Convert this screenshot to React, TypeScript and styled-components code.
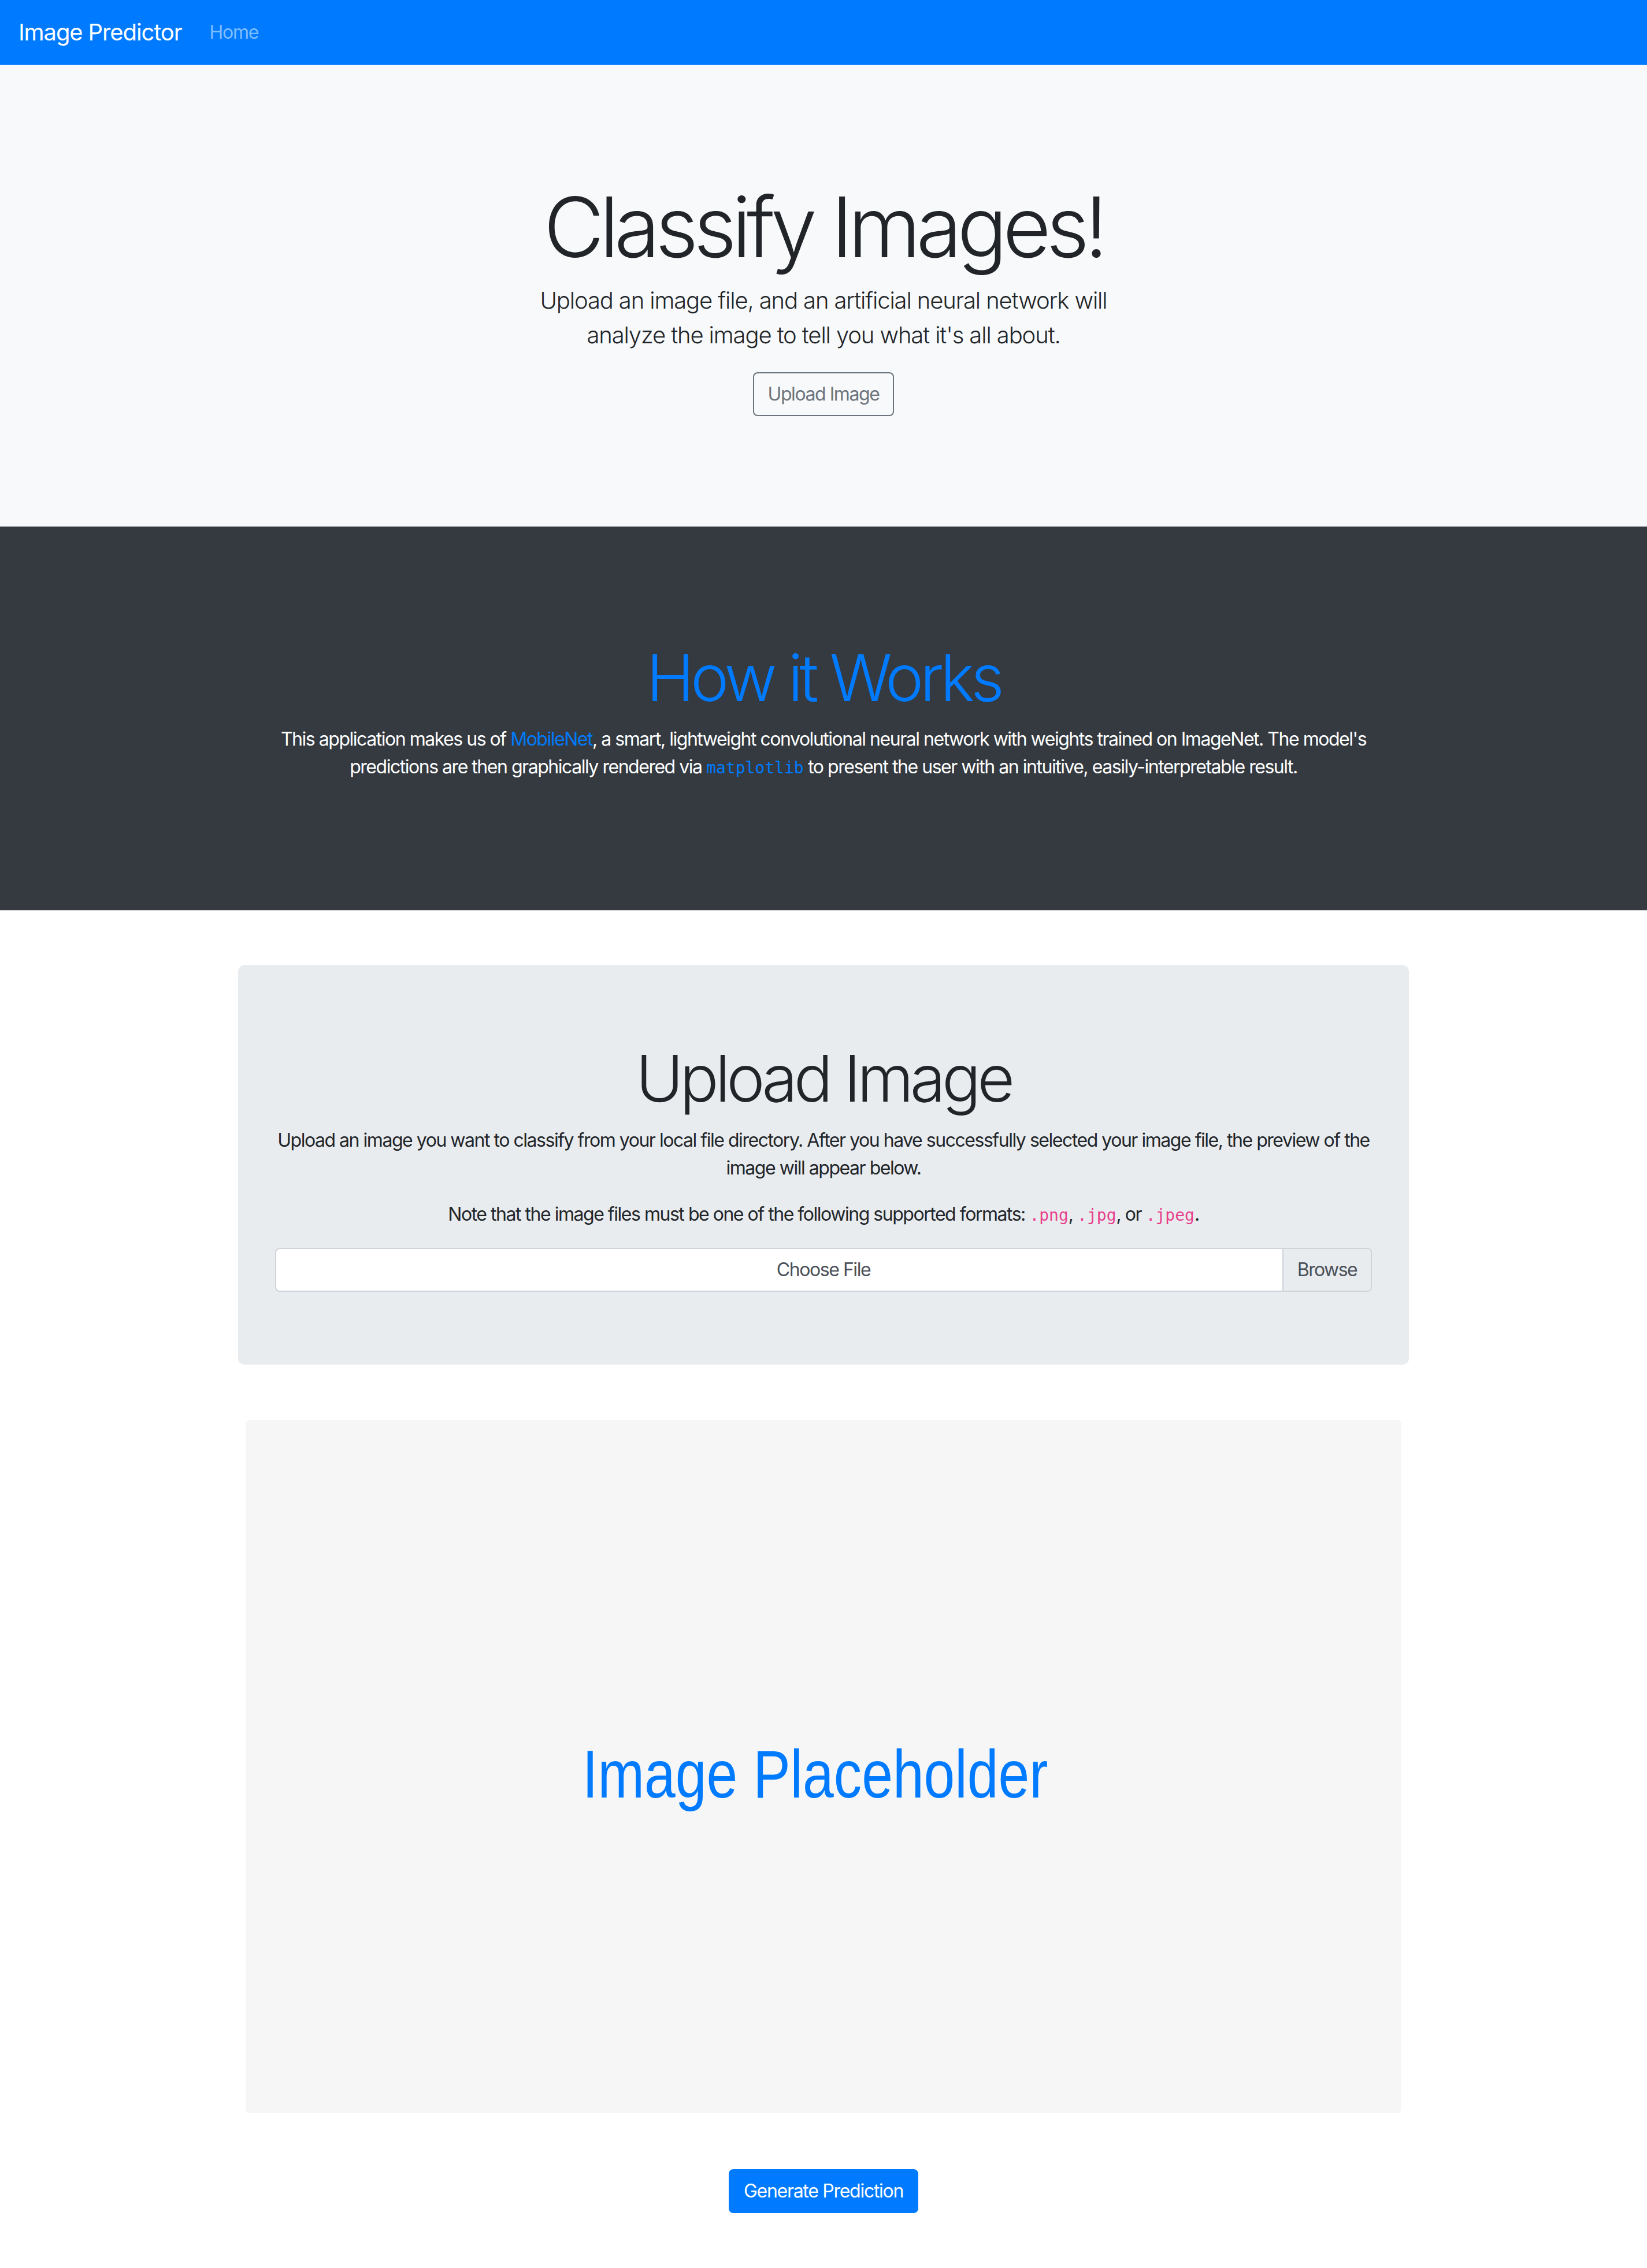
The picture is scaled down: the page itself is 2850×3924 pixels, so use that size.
import React from "react";
import styled, { createGlobalStyle } from "styled-components";

const GlobalStyle = createGlobalStyle`
  html, body {
    margin: 0;
    padding: 0;
    background: #ffffff;
  }
  body {
    font-family: Inter, "Liberation Sans", "DejaVu Sans", sans-serif;
    font-size: 32px;
    line-height: 48px;
    color: #212529;
    -webkit-font-smoothing: antialiased;
  }
  * { box-sizing: border-box; }
`;

const Page = styled.div`
  display: flex;
  flex-direction: column;
`;

const Navbar = styled.nav`
  height: 112px;
  background: #007bff;
  display: flex;
  align-items: center;
  padding: 0 32px;
`;

const Brand = styled.a`
  font-size: 40px;
  line-height: 60px;
  color: #ffffff;
  text-decoration: none;
  margin-right: 32px;
  white-space: nowrap;
  letter-spacing: -0.028em;
`;

const NavLink = styled.a`
  font-size: 32px;
  line-height: 48px;
  padding: 0 16px;
  color: rgba(255, 255, 255, 0.5);
  text-decoration: none;
  letter-spacing: -0.04em;
`;

const Hero = styled.section`
  background: #f8f9fa;
  padding: 195px 32px 191px;
  display: flex;
  flex-direction: column;
  align-items: center;
  text-align: center;
`;

const DisplayTitle = styled.h1<{ $size: number; $color?: string; $gap: number }>`
  margin: 0 0 ${(p) => p.$gap}px;
  font-size: ${(p) => p.$size}px;
  line-height: 1.2;
  font-weight: 300;
  color: ${(p) => p.$color || "#212529"};
  letter-spacing: -0.056em;
`;

const Lead = styled.p`
  margin: 0 0 34px;
  max-width: 1010px;
  font-size: 40px;
  line-height: 60px;
  font-weight: 300;
  letter-spacing: -0.028em;
`;

const OutlineButton = styled.button`
  font-family: inherit;
  font-size: 32px;
  line-height: 48px;
  padding: 12px 24px;
  border: 2px solid #6c757d;
  border-radius: 8px;
  background: transparent;
  color: #6c757d;
  cursor: pointer;
  letter-spacing: -0.045em;
`;

const DarkSection = styled.section`
  background: #343a40;
  padding: 194px 32px 190px;
  text-align: center;
`;

const Container = styled.div`
  max-width: 2026px;
  margin: 0 auto;
`;

const BodyText = styled.p<{ $light?: boolean }>`
  margin: 0 0 32px;
  font-size: 32px;
  line-height: 48px;
  color: ${(p) => (p.$light ? "#ffffff" : "#212529")};
  letter-spacing: -0.046em;
`;

const Link = styled.a`
  color: #007bff;
  text-decoration: none;
`;

const Code = styled.code<{ $color: string }>`
  font-family: "DejaVu Sans Mono", "Liberation Mono", monospace;
  font-size: 28px;
  color: ${(p) => p.$color};
  letter-spacing: 0;
`;

const Main = styled.main`
  padding: 95px 0 96px;
  display: flex;
  flex-direction: column;
  align-items: center;
`;

const UploadCard = styled.div`
  width: 2026px;
  padding: 128px 64px 126px;
  background: #e9ecef;
  border-radius: 10px;
  text-align: center;
`;

const FileInput = styled.label`
  display: grid;
  grid-template-columns: 1fr auto;
  height: 76px;
  border: 2px solid #ced4da;
  border-radius: 8px;
  background: #ffffff;
  overflow: hidden;
  color: #495057;
  cursor: pointer;
`;

const FileLabel = styled.span`
  grid-column: 1 / -1;
  grid-row: 1;
  padding: 12px 24px;
  font-size: 32px;
  line-height: 48px;
  text-align: center;
  letter-spacing: -0.045em;
`;

const BrowseTag = styled.span`
  grid-column: 2;
  grid-row: 1;
  padding: 12px 24px;
  font-size: 32px;
  line-height: 48px;
  background: #e9ecef;
  border-left: 2px solid #ced4da;
  letter-spacing: -0.05em;
`;

const Placeholder = styled.div`
  width: 2000px;
  height: 1199px;
  margin-top: 96px;
  background: #f6f6f6;
  border-radius: 8px;
  display: flex;
  align-items: center;
  justify-content: center;
  overflow: hidden;
`;

const PlaceholderText = styled.span`
  font-family: "Liberation Sans", Arial, sans-serif;
  font-size: 116px;
  line-height: 1;
  color: #007bff;
  white-space: nowrap;
  transform: translate(-14px, 14px) scaleX(0.833);
`;

const PrimaryButton = styled.button`
  margin-top: 97px;
  font-family: inherit;
  font-size: 32px;
  line-height: 48px;
  padding: 12px 24px;
  border: 2px solid #007bff;
  border-radius: 8px;
  background: #007bff;
  color: #ffffff;
  cursor: pointer;
  letter-spacing: -0.04em;
`;

export default function App() {
  return (
    <>
      <GlobalStyle />
      <Page>
        <Navbar>
          <Brand href="#">Image Predictor</Brand>
          <NavLink href="#">Home</NavLink>
        </Navbar>

        <Hero>
          <DisplayTitle $size={144} $gap={10}>Classify Images!</DisplayTitle>
          <Lead>
            Upload an image file, and an artificial neural network will analyze
            the image to tell you what it's all about.
          </Lead>
          <OutlineButton>Upload Image</OutlineButton>
        </Hero>

        <DarkSection>
          <Container>
            <DisplayTitle $size={112} $gap={16} $color="#007bff">
              How it Works
            </DisplayTitle>
            <BodyText $light>
              This application makes us of <Link href="#">MobileNet</Link>, a
              smart, lightweight convolutional neural network with weights
              trained on ImageNet. The model's predictions are then graphically
              rendered via{" "}
              <Link href="#">
                <Code $color="#007bff">matplotlib</Code>
              </Link>{" "}
              to present the user with an intuitive, easily-interpretable
              result.
            </BodyText>
          </Container>
        </DarkSection>

        <Main>
          <UploadCard>
            <DisplayTitle $size={112} $gap={16}>Upload Image</DisplayTitle>
            <BodyText>
              Upload an image you want to classify from your local file
              directory. After you have successfully selected your image file,
              the preview of the image will appear below.
            </BodyText>
            <BodyText>
              Note that the image files must be one of the following supported
              formats: <Code $color="#e83e8c">.png</Code>,{" "}
              <Code $color="#e83e8c">.jpg</Code>, or{" "}
              <Code $color="#e83e8c">.jpeg</Code>.
            </BodyText>
            <FileInput>
              <FileLabel>Choose File</FileLabel>
              <BrowseTag>Browse</BrowseTag>
            </FileInput>
          </UploadCard>

          <Placeholder>
            <PlaceholderText>Image Placeholder</PlaceholderText>
          </Placeholder>

          <PrimaryButton>Generate Prediction</PrimaryButton>
        </Main>
      </Page>
    </>
  );
}
